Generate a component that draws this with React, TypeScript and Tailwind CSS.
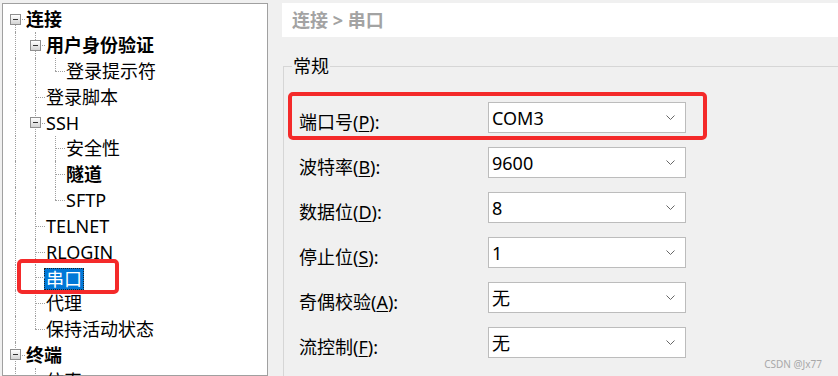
type Cell = "pipe" | "blank" | "tee" | "end" | "first";

type Row = {
  text: string;
  cells: Cell[];
  bold?: boolean;
  expander?: boolean;
  selected?: boolean;
};

const ROWS: Row[] = [
  { text: "连接", cells: ["first"], bold: true, expander: true },
  { text: "用户身份验证", cells: ["pipe", "tee"], bold: true, expander: true },
  { text: "登录提示符", cells: ["pipe", "pipe", "end"] },
  { text: "登录脚本", cells: ["pipe", "tee"] },
  { text: "SSH", cells: ["pipe", "tee"], expander: true },
  { text: "安全性", cells: ["pipe", "pipe", "tee"] },
  { text: "隧道", cells: ["pipe", "pipe", "tee"], bold: true },
  { text: "SFTP", cells: ["pipe", "pipe", "end"] },
  { text: "TELNET", cells: ["pipe", "tee"] },
  { text: "RLOGIN", cells: ["pipe", "tee"] },
  { text: "串口", cells: ["pipe", "tee"], selected: true },
  { text: "代理", cells: ["pipe", "tee"] },
  { text: "保持活动状态", cells: ["pipe", "end"] },
  { text: "终端", cells: ["tee"], bold: true, expander: true },
  { text: "仿真", cells: ["pipe", "tee"] },
];

const FIELDS = [
  { label: "端口号", key: "P", value: "COM3" },
  { label: "波特率", key: "B", value: "9600" },
  { label: "数据位", key: "D", value: "8" },
  { label: "停止位", key: "S", value: "1" },
  { label: "奇偶校验", key: "A", value: "无" },
  { label: "流控制", key: "F", value: "无" },
];

function TreeCell({ kind, expander }: { kind: Cell; expander?: boolean }) {
  const line = "absolute border-dotted border-[#a0a0a0]";
  return (
    <div className="relative flex h-full w-5 shrink-0 items-center">
      {(kind === "pipe" || kind === "tee") && (
        <div className={`${line} left-[10px] top-0 bottom-0 border-l`} />
      )}
      {kind === "end" && <div className={`${line} left-[10px] top-0 h-1/2 border-l`} />}
      {kind === "first" && <div className={`${line} left-[10px] top-1/2 bottom-0 border-l`} />}
      {kind !== "pipe" && kind !== "blank" && (
        <div className={`${line} left-[10px] right-0 top-1/2 border-t`} />
      )}
      {expander && (
        <div className="relative ml-[5px] flex h-[11px] w-[11px] items-center justify-center border border-[#8f8f8f] bg-gradient-to-b from-white to-[#d4d4d4]">
          <div className="h-px w-[5px] bg-[#333]" />
        </div>
      )}
    </div>
  );
}

function Combo({ value }: { value: string }) {
  return (
    <div className="flex h-[31px] w-[198px] items-center justify-between border border-[#bcbcbc] bg-white pl-[3px] pr-[10px]">
      <span className="text-[18px] leading-none text-black">{value}</span>
      <svg width="9" height="5" viewBox="0 0 9 5" fill="none">
        <path d="M0.5 0.5 L4.5 4.5 L8.5 0.5" stroke="#666" strokeWidth="1" />
      </svg>
    </div>
  );
}

export default function App() {
  return (
    <div className="relative flex h-[376px] w-[838px] overflow-hidden bg-[#f0f0f0] font-['Noto_Sans','Noto_Sans_CJK_SC',sans-serif] text-black">
      {/* Tree */}
      <div className="relative ml-[2px] mt-[3px] w-[266px] shrink-0 border border-[#a0a0a0] bg-white pl-[2px] pt-[2.6px]">
        {ROWS.map((row) => (
          <div key={row.text} className="flex h-[25.8px] items-center">
            {row.cells.map((c, i) => (
              <TreeCell
                key={i}
                kind={c}
                expander={row.expander && i === row.cells.length - 1}
              />
            ))}
            {row.selected ? (
              <span className="ml-[-1px] mt-[3px] h-[22px] bg-[#0078d7] px-[2px] text-[18px] leading-[22px] text-white outline-1 -outline-offset-1 outline-dotted outline-[#222]">
                {row.text}
              </span>
            ) : (
              <span
                className={`ml-[1px] text-[18px] leading-none ${row.bold ? "font-bold" : ""}`}
              >
                {row.text}
              </span>
            )}
          </div>
        ))}
        <div className="absolute left-[14px] top-[255px] h-[35px] w-[102px] rounded-[5px] border-[4px] border-[#f42a2a]" />
      </div>

      {/* Settings */}
      <div className="ml-[14px] flex flex-1 flex-col">
        <div className="mt-[3px] flex h-[34px] items-center bg-white pl-[10px] text-[18px] font-bold text-[#a3a3a3]">
          连接 &gt; 串口
        </div>

        <div className="relative mt-[29px] ml-[1px] flex-1 border-l border-t border-[#d6d6d6] pl-[15px] pt-[35px]">
          <span className="absolute left-[8px] top-[-10px] bg-[#f0f0f0] px-px text-[18px] leading-[18px]">
            常规
          </span>
          <div className="flex flex-col gap-[14px]">
            {FIELDS.map((f) => (
              <div key={f.key} className="flex h-[31px] items-center">
                <span className="mt-[8px] w-[189px] text-[18px] leading-none">
                  {f.label}(<span className="underline underline-offset-2">{f.key}</span>):
                </span>
                <Combo value={f.value} />
              </div>
            ))}
          </div>
          <div className="absolute left-[4px] top-[25px] h-[48px] w-[419px] rounded-[5px] border-[4px] border-[#f42a2a]" />
        </div>
      </div>

      <span className="absolute bottom-[7px] right-[16px] text-[10px] leading-none text-[#a8a8a8]">
        CSDN @Jx77
      </span>
    </div>
  );
}
